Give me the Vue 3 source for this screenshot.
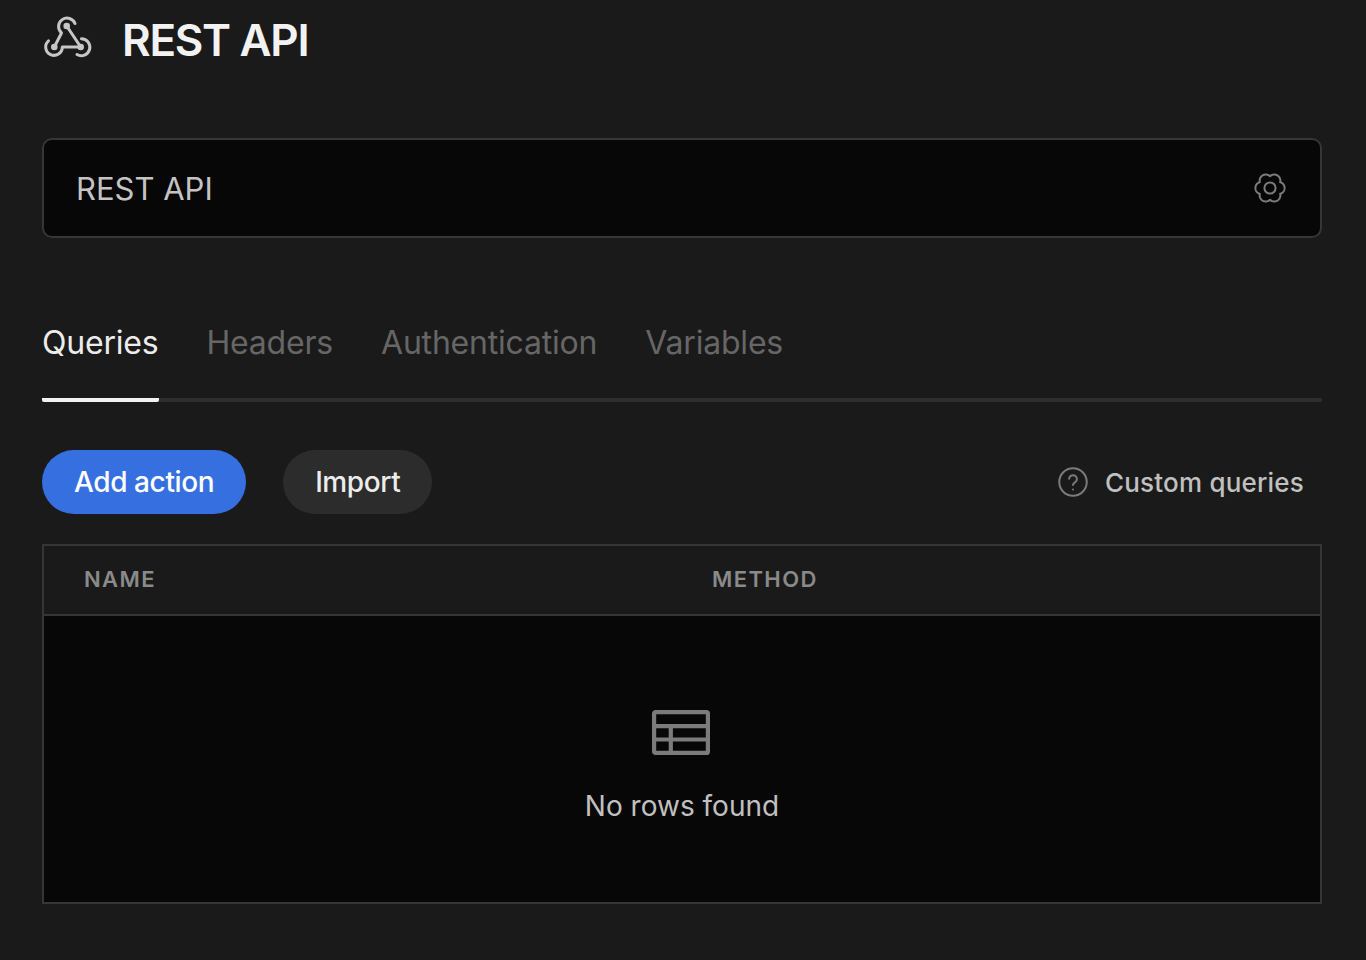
<script setup>
const tabs = ['Queries', 'Headers', 'Authentication', 'Variables']

// six-lobed cog outline, sampled around the circle
const gearPath = Array.from({ length: 180 }, (_, i) => {
  const a = (i / 180) * Math.PI * 2
  const r = 11.7 + 2.9 * Math.pow(Math.abs(Math.cos(3 * a)), 0.8)
  return `${i ? 'L' : 'M'}${(r * Math.cos(a)).toFixed(2)} ${(r * Math.sin(a)).toFixed(2)}`
}).join(' ') + ' Z'
</script>

<template>
  <div class="page">
    <header class="title-row">
      <svg class="hook" viewBox="0 0 56 50" fill="none" stroke="currentColor" stroke-width="3" stroke-linecap="round" stroke-linejoin="round">
        <path d="M14.3 35 L21.5 21 A8.5 8.5 0 1 1 35 11.5" />
        <path d="M26.7 14 L40.7 35" />
        <path d="M8.5 28.8 A8.3 8.3 0 1 0 22.3 35 H40.7" />
        <path d="M41.5 26.7 A8.5 8.5 0 1 1 37 42.5" />
        <circle cx="26.7" cy="14" r="1.8" fill="currentColor" />
        <circle cx="14.3" cy="35" r="1.8" fill="currentColor" />
        <circle cx="40.7" cy="35" r="1.8" fill="currentColor" />
      </svg>
      <h1>REST API</h1>
    </header>

    <div class="name-box">
      <span>REST API</span>
      <svg class="gear" viewBox="-16 -16 32 32" fill="none" stroke="currentColor" stroke-width="2" stroke-linejoin="round">
        <path :d="gearPath" />
        <circle cx="0" cy="0" r="5.6" />
      </svg>
    </div>

    <nav class="tabs">
      <div v-for="(t, i) in tabs" :key="t" class="tab" :class="{ active: i === 0 }">{{ t }}</div>
    </nav>

    <div class="actions">
      <button class="btn primary">Add action</button>
      <button class="btn secondary">Import</button>
      <div class="custom">
        <svg class="help" viewBox="0 0 24 24" fill="none" stroke="currentColor" stroke-width="1.6" stroke-linecap="round" stroke-linejoin="round">
          <circle cx="12" cy="12" r="11" />
          <path d="M8.9 9.4a3.1 3.1 0 0 1 6.2.6c0 2.2-3.1 2.5-3.1 4.3" />
          <path d="M12 17.9h.01" />
        </svg>
        <span>Custom queries</span>
      </div>
    </div>

    <section class="table">
      <div class="thead">
        <div class="col-name">NAME</div>
        <div>METHOD</div>
      </div>
      <div class="empty">
        <svg class="table-icon" viewBox="0 0 58 45" fill="none" stroke="currentColor" stroke-width="4.2" stroke-linejoin="round">
          <rect x="2.1" y="2.1" width="53.8" height="40.8" rx="1.5" />
          <path d="M2 16.2h54M2 29.5h54M18.8 16.2v26.7" />
        </svg>
        <div class="empty-text">No rows found</div>
      </div>
    </section>
  </div>
</template>

<style scoped>
.page {
  width: 1280px;
  height: 960px;
  padding-left: 42px;
  padding-right: 44px;
  background: #1a1a1a;
  font-family: Inter, "Liberation Sans", sans-serif;
  overflow: hidden;
}
.title-row {
  display: flex;
  align-items: center;
  gap: 26px;
  height: 82px;
}
.hook {
  width: 56px;
  height: 50px;
  margin-left: -2px;
  margin-top: -8px;
  flex: none;
  color: #c6c6c6;
}
h1 {
  margin: 0 0 2px;
  font-size: 44px;
  line-height: 80px;
  font-weight: 600;
  letter-spacing: -1.3px;
  color: #f2f2f2;
}
.name-box {
  display: flex;
  align-items: center;
  justify-content: space-between;
  box-sizing: border-box;
  height: 100px;
  margin-top: 56px;
  padding: 0 34px 0 32px;
  background: #070707;
  border: 2px solid #363636;
  border-radius: 10px;
  font-size: 31px;
  color: #c4c4c4;
}
.gear {
  width: 32px;
  height: 32px;
  color: #7b7b7b;
}
.tabs {
  display: flex;
  gap: 48px;
  margin-top: 76px;
  height: 88px;
  box-sizing: border-box;
  border-bottom: 4px solid #2d2d2d;
}
.tab {
  height: 88px;
  box-sizing: border-box;
  line-height: 58px;
  font-size: 32px;
  letter-spacing: -0.2px;
  color: #666;
}
.tab.active {
  color: #ececec;
  border-bottom: 4px solid #f2f2f2;
  border-radius: 2px;
}
.actions {
  display: flex;
  align-items: center;
  margin-top: 48px;
  height: 64px;
}
.btn {
  height: 64px;
  border: 0;
  border-radius: 32px;
  font-family: inherit;
  font-size: 28px;
  font-weight: 500;
  letter-spacing: -0.4px;
  padding: 0 32px;
}
.primary {
  background: #3670e0;
  color: #fff;
}
.secondary {
  margin-left: 37px;
  background: #2c2c2c;
  color: #ececec;
}
.custom {
  margin-left: auto;
  margin-right: 18px;
  display: flex;
  align-items: center;
  gap: 17px;
  font-size: 26px;
  font-weight: 500;
  letter-spacing: 0.2px;
  color: #c0c0c0;
}
.help {
  width: 30px;
  height: 30px;
  color: #7b7b7b;
}
.table {
  margin-top: 30px;
  height: 360px;
  box-sizing: border-box;
  border: 2px solid #363636;
  display: flex;
  flex-direction: column;
}
.thead {
  display: flex;
  align-items: center;
  height: 70px;
  padding-bottom: 2px;
  flex: none;
  box-sizing: border-box;
  border-bottom: 2px solid #363636;
  font-size: 22px;
  font-weight: 600;
  letter-spacing: 1.4px;
  color: #8a8a8a;
}
.col-name {
  width: 668px;
  padding-left: 40px;
  box-sizing: border-box;
}
.empty {
  flex: 1;
  background: #070707;
  display: flex;
  flex-direction: column;
  align-items: center;
  padding-top: 94px;
  box-sizing: border-box;
}
.table-icon {
  width: 58px;
  height: 45px;
  margin-right: 2px;
  color: #7b7b7b;
}
.empty-text {
  margin-top: 30px;
  font-size: 28px;
  line-height: 42px;
  color: #c0c0c0;
}
</style>

<style>
html, body { background: #1a1a1a; }
</style>
